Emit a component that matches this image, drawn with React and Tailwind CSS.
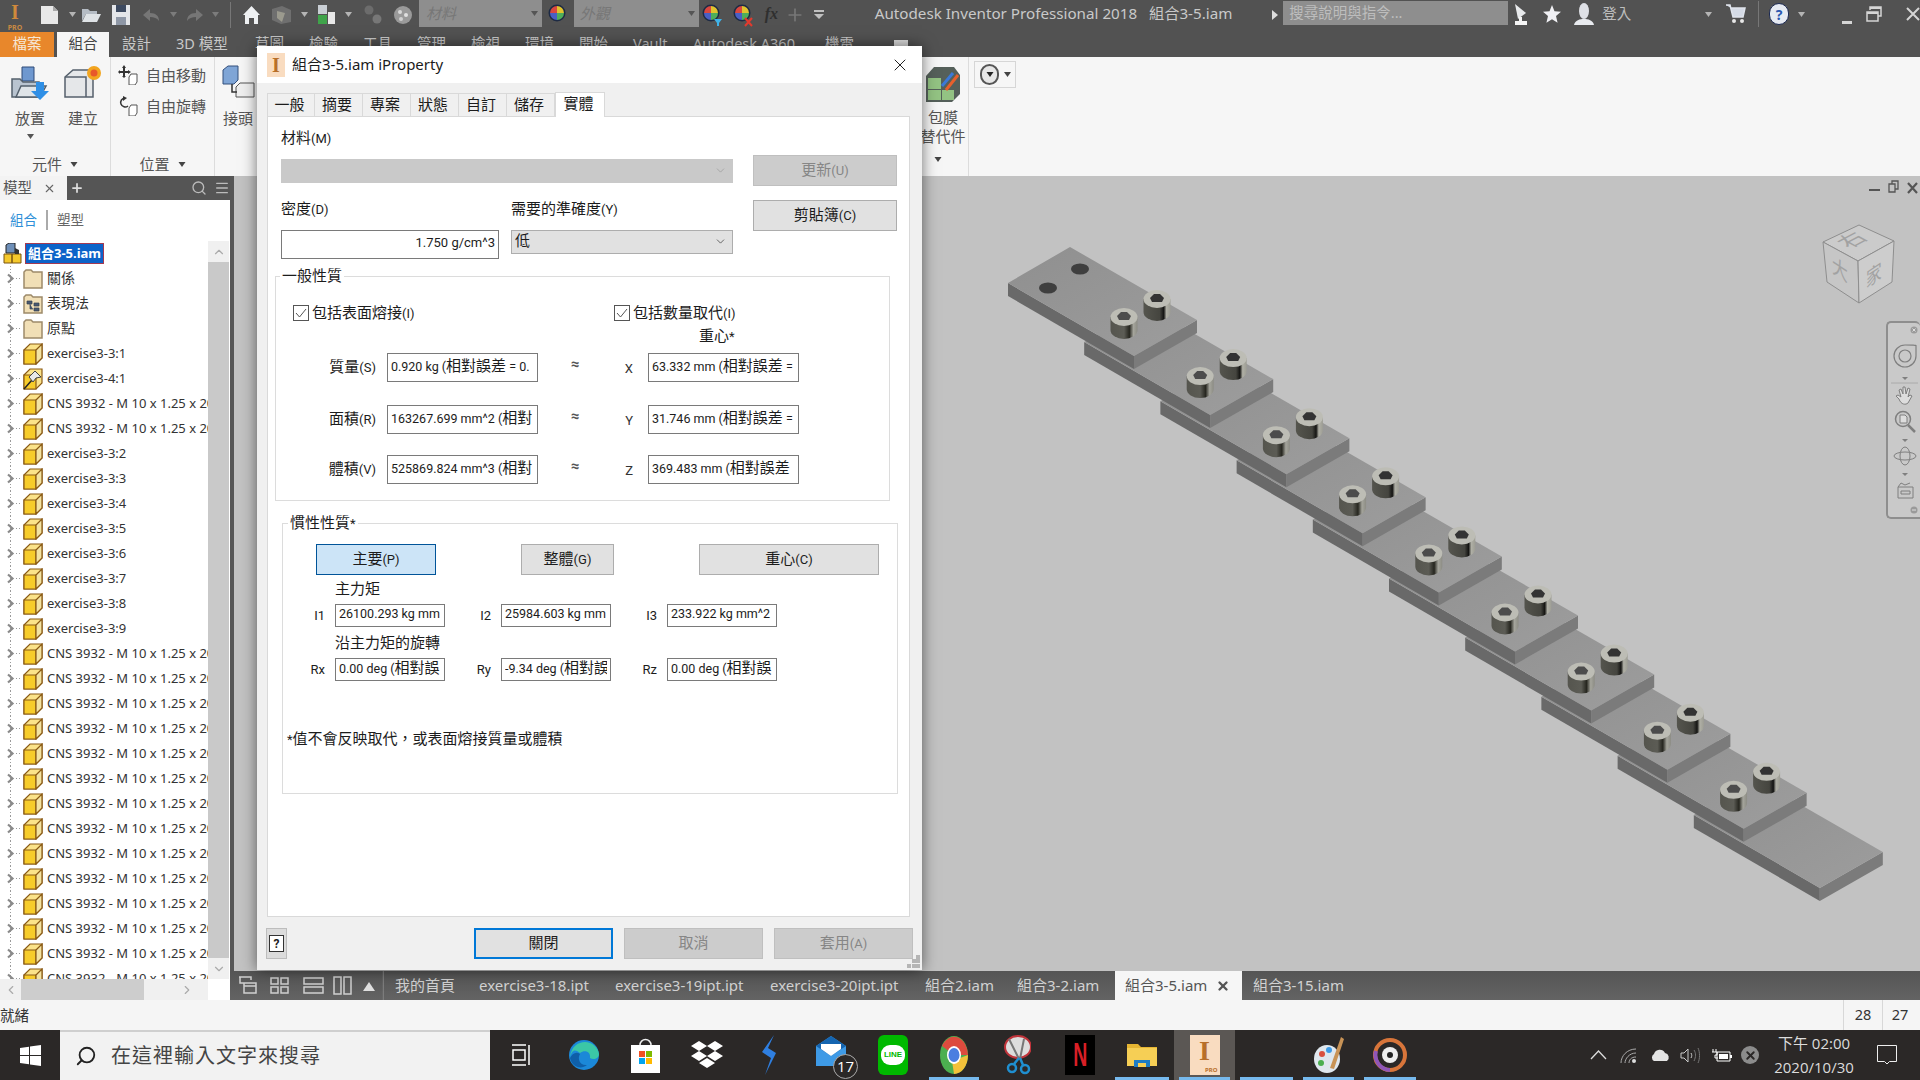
import React from 'react';
import { ChevronDown, ChevronLeft, ChevronRight, ChevronUp, Menu, Plus, Search, X } from 'lucide-react';

const Caret = ({ className = '', color = '#b5b5b5' }) => (
  <svg width="7" height="5" viewBox="0 0 7 5" className={`shrink-0 ${className}`}>
    <path d="M0 0h7L3.5 5z" fill={color} />
  </svg>
);

/* ---------- title bar icons ---------- */
const Ico = ({ w = 20, h = 20, className = '', children }) => (
  <svg width={w} height={h} viewBox={`0 0 ${w} ${h}`} className={`shrink-0 ${className}`}>
    {children}
  </svg>
);

const Ball = ({ className = '', badge }) => (
  <Ico w={20} h={24} className={className}>
    <circle cx="9" cy="10" r="8.5" fill="#1d2a44" />
    <path d="M9 3a7 7 0 0 1 7 7H9z" fill="#e0c22e" />
    <path d="M9 3a7 7 0 0 0-7 7h7z" fill="#d9473f" />
    <path d="M2 10a7 7 0 0 0 7 7v-7z" fill="#4a5fc4" />
    <path d="M16 10a7 7 0 0 1-7 7v-7z" fill="#4fae5a" />
    {badge === 'x' && <path d="M12 15l7 8M19 15l-7 8" stroke="#e23a2e" strokeWidth="2" />}
    {badge === 'cup' && <path d="M12 16h8l-3 4v3h-2v-3z" fill="#3fb2e8" />}
  </Ico>
);

const TitleBar = () => (
  <div className="h-[32px] shrink-0 bg-[#525252] flex items-center text-[#c8c8c8]">
    <div className="w-[28px] h-full flex flex-col items-center pl-[2px]">
      <span className="text-[#d08a3c] font-bold text-[20px] leading-[24px] font-['Liberation_Serif',serif]">I</span>
      <span className="text-[#c98a42] font-bold text-[7px] leading-[7px]">PRO</span>
    </div>
    <Ico w={19} h={20} className="ml-[12px] -mt-[3px]">
      <path d="M1 1h12l5 5v13H1z" fill="#e8e8e8" />
      <path d="M13 1l5 5h-5z" fill="#a8a8a8" />
    </Ico>
    <Caret className="ml-[10px] -mt-[3px]" />
    <Ico w={20} h={16} className="ml-[5px] -mt-[3px]">
      <path d="M1 14V2h6l2 2h7v3H5l-4 7z" fill="#b5bcc4" />
      <path d="M5 7h15l-4 8H1z" fill="#dfe3e6" />
    </Ico>
    <Ico w={20} h={22} className="ml-[10px] -mt-[3px]">
      <path d="M1 1h18v20H1z" fill="#e4e6e9" />
      <path d="M5 1h10v7H5z" fill="#3d4a60" />
      <path d="M5 13h10v8H5z" fill="#8e97a6" />
    </Ico>
    <Ico w={18} h={14} className="ml-[11px] -mt-[3px]">
      <path d="M8 1L1 7l7 6V9c4 0 7 1 9 4 0-5-3-8-9-8z" fill="#767676" />
    </Ico>
    <Caret className="ml-[10px] -mt-[3px]" color="#7c7c7c" />
    <Ico w={18} h={14} className="ml-[9px] -mt-[3px]">
      <path d="M10 1l7 6-7 6V9c-4 0-7 1-9 4 0-5 3-8 9-8z" fill="#767676" />
    </Ico>
    <Caret className="ml-[8px] -mt-[3px]" color="#7c7c7c" />
    <div className="ml-[11px] w-px h-[26px] -mt-[3px] bg-[#777]" />
    <Ico w={17} h={20} className="ml-[12px] -mt-[3px]">
      <path d="M8.500 1L0 10h2v9h4v-6h5v6h4v-9h2z" fill="#eef0f2" />
    </Ico>
    <Ico w={21} h={20} className="ml-[11px] -mt-[3px]">
      <path d="M1 4l10-3 9 4v12l-10 2-9-4z" fill="#6f6f6f" />
      <path d="M6 6l8 2-3 9-5-4z" fill="#9b9a8e" />
    </Ico>
    <Caret className="ml-[9px] -mt-[3px]" />
    <Ico w={20} h={22} className="ml-[9px] -mt-[3px]">
      <rect x="1" y="1" width="9" height="9" fill="#c9ced4" />
      <rect x="1" y="11" width="9" height="9" fill="#3fa34a" />
      <rect x="11" y="8" width="7" height="12" fill="#e8e8e8" />
    </Ico>
    <Caret className="ml-[8px] -mt-[3px]" />
    <Ico w={18} h={22} className="ml-[12px] -mt-[3px]">
      <circle cx="5" cy="6" r="4.500" fill="#6c6c6c" />
      <circle cx="13" cy="15" r="4.500" fill="#777" />
    </Ico>
    <Ico w={18} h={18} className="ml-[12px] -mt-[3px]">
      <circle cx="9" cy="9" r="9" fill="#9a9a9a" />
      <circle cx="6" cy="6" r="2" fill="#d8d8d8" />
      <circle cx="12" cy="9" r="2" fill="#e0e0e0" />
      <circle cx="7" cy="13" r="2" fill="#cfcfcf" />
    </Ico>
    <div className="ml-[7px] w-[123px] h-[27px] self-start bg-[#8e8e8e] flex items-center justify-between pl-[7px] pr-[3px]">
      <span className="italic text-[15px] text-[#777]">材料</span>
      <Caret color="#555" className="w-[9px]" />
    </div>
    <Ball className="ml-[6px] -mt-[3px]" />
    <div className="ml-[6px] w-[125px] h-[27px] self-start bg-[#8e8e8e] flex items-center justify-between pl-[6px] pr-[3px]">
      <span className="italic text-[15px] text-[#777]">外觀</span>
      <Caret color="#555" className="w-[9px]" />
    </div>
    <Ball className="ml-[3px] -mt-[3px]" badge="cup" />
    <Ball className="ml-[11px] -mt-[3px]" badge="x" />
    <span className="ml-[12px] w-[18px] italic font-bold text-[16px] text-[#2f2f2f] font-['Liberation_Serif',serif] -mt-[4px]">fx</span>
    <Plus size={20} color="#777" className="ml-[2px] -mt-[3px]" />
    <Ico w={10} h={11} className="ml-[9px] -mt-[3px]">
      <path d="M0 1h10v2H0zM0 5h10L5 10z" fill="#c0c0c0" />
    </Ico>
    <span className="ml-[51px] w-[398px] text-[15.2px] text-[#c9c9c9] whitespace-pre -mt-[5px]">Autodesk Inventor Professional 2018{'   '}組合3-5.iam</span>
    <Ico w={6} h={10} className="-mt-[3px]">
      <path d="M0 0l6 5-6 5z" fill="#ddd" />
    </Ico>
    <div className="ml-[5px] w-[225px] h-[24px] self-start mt-[1px] bg-[#8e8e8e] flex items-center pl-[6px] text-[14.5px] text-[#bdbdbd]">搜尋說明與指令...</div>
    <Ico w={16} h={24} className="ml-[5px] -mt-[4px]">
      <path d="M2 2l11 9-8 6z" fill="#e8eaec" />
      <path d="M6 15h3v4h5v4H2v-4h4z" fill="#f5f5f5" />
    </Ico>
    <Ico w={18} h={18} className="ml-[14px] -mt-[4px]">
      <path d="M9 0l2.500 6.300 6.500.5-5 4.300 1.600 6.600L9 14.200 3.400 17.700 5 11.100 0 6.800l6.500-.5z" fill="#f0f0f4" />
    </Ico>
    <Ico w={20} h={24} className="ml-[13px] -mt-[4px]">
      <ellipse cx="10" cy="9" rx="5" ry="8" fill="#dfe1e6" />
      <path d="M0 23c1-5 6-6 10-6s9 1 10 6z" fill="#e9ebef" />
    </Ico>
    <span className="ml-[8px] w-[103px] text-[14.5px] text-[#bdbdbd] -mt-[5px]">登入</span>
    <Caret className="-mt-[3px]" />
    <Ico w={20} h={22} className="ml-[14px] -mt-[4px]">
      <path d="M0 2h4l3 12h10l2-9H5" fill="#d5dbe6" stroke="#dfe4ec" strokeWidth="1.500" />
      <circle cx="8" cy="18" r="2" fill="#e8e8e8" />
      <circle cx="16" cy="18" r="2" fill="#e8e8e8" />
    </Ico>
    <div className="ml-[12px] w-px h-[26px] -mt-[4px] bg-[#777]" />
    <div className="ml-[10px] w-[20px] h-[22px] -mt-[4px] rounded-full bg-[#e6eaf2] border border-[#1d2a52] flex items-center justify-center text-[#2b57b0] font-bold text-[14px]">?</div>
    <Caret className="ml-[9px] -mt-[3px]" />
    <div className="ml-[37px] w-[10px] h-[3px] bg-[#d5d5d5] self-end mb-[8px]" />
    <Ico w={16} h={16} className="ml-[14px] -mt-[4px]">
      <path d="M4 4V1h11v9h-3M1 6h11v9H1zM1 6h11" fill="none" stroke="#d5d5d5" strokeWidth="1.500" />
      <path d="M1 6h11v2H1zM4 1h11v2H4z" fill="#d5d5d5" />
    </Ico>
    <Ico w={14} h={14} className="ml-[24px] -mt-[4px]">
      <path d="M1 1l12 12M13 1L1 13" stroke="#d5d5d5" strokeWidth="2" />
    </Ico>
  </div>
);

/* ---------- ribbon ---------- */
const ribbonTabs = [
  ['設計', 'w-[54px]'],
  ['3D 模型', 'w-[79px]'],
  ['草圖', 'w-[54px]'],
  ['檢驗', 'w-[54px]'],
  ['工具', 'w-[54px]'],
  ['管理', 'w-[54px]'],
  ['檢視', 'w-[54px]'],
  ['環境', 'w-[54px]'],
  ['開始', 'w-[54px]'],
  ['Vault', 'w-[60px]'],
  ['Autodesk A360', 'w-[132px]'],
  ['機電', 'w-[69px]'],
];

const RibbonTabs = () => (
  <div className="h-[25px] shrink-0 bg-[#525252] flex text-[14.5px] text-[#c9c9c9]">
    <div className="w-[54px] bg-[#e8872b] text-[#f6e6d4] flex items-center justify-center pb-[1px]">檔案</div>
    <div className="ml-[3px] w-[52px] bg-[#f6f6f6] text-[#444] flex items-center justify-center pb-[1px]">組合</div>
    <div className="w-[13px]" />
    {ribbonTabs.map(([label, w]) => (
      <div key={label} className={`${w} flex items-center whitespace-nowrap pb-[1px]`}>{label}</div>
    ))}
    <div className="w-[14px] h-[9px] mt-[8px] bg-[#ddd]" />
  </div>
);

const Ribbon = () => (
  <div className="h-[119px] shrink-0 bg-[#f6f6f6] flex text-[#555] text-[15px]">
    <div className="w-[111px] border-r border-[#dcdcdc] flex flex-col">
      <div className="flex-1 flex">
        <div className="w-[60px] flex flex-col items-center pt-[8px]">
          <Ico w={40} h={36}>
            <path d="M12 2h12v14H12z" fill="#6f98cf" stroke="#2e4a78" />
            <path d="M2 14h8l3 3h16v15H2z" fill="#b9c4d0" stroke="#54606c" strokeWidth="1.500" />
            <path d="M6 32l5-11h25l-6 11z" fill="#dfe4e8" stroke="#54606c" strokeWidth="1.500" />
            <path d="M26 17h8v9h5l-9 9-9-9h5z" fill="#2f8fe6" />
          </Ico>
          <span className="mt-[7px] leading-[20px]">放置</span>
          <Caret color="#555" className="mt-[6px]" />
        </div>
        <div className="flex flex-col items-center pt-[8px] w-[40px] ml-[3px]">
          <Ico w={38} h={36}>
            <path d="M1 12l8-7h20v27H1z" fill="#e5e7e9" stroke="#55606c" strokeWidth="1.500" />
            <path d="M1 12h21v20" fill="none" stroke="#55606c" strokeWidth="1.500" />
            <circle cx="30" cy="8" r="7" fill="#f2a51f" />
            <circle cx="30" cy="8" r="3.500" fill="#e8582a" />
          </Ico>
          <span className="mt-[7px] leading-[20px]">建立</span>
        </div>
      </div>
      <div className="h-[22px] flex items-center justify-center gap-[8px] mb-[1px]">元件<Caret color="#444" className="w-[8px]" /></div>
    </div>
    <div className="w-[104px] border-r border-[#dcdcdc] flex flex-col">
      <div className="flex-1 pl-[7px] pt-[8px]">
        <div className="flex items-center h-[20px]">
          <Ico w={20} h={20}>
            <path d="M6 0l2 3H7v3h3V5l3 2-3 2V8H7v3h1l-2 2-2-2h1V8H2v1L0 7l2-2v1h3V3H4z" fill="#333" />
            <path d="M11 12l2-3h6v8l-2 3h-6z" fill="#fff" stroke="#555" />
          </Ico>
          <span className="ml-[8px]">自由移動</span>
        </div>
        <div className="flex items-center h-[20px] mt-[11px]">
          <Ico w={20} h={20}>
            <path d="M7 2a4.500 4.500 0 1 0 3 8" fill="none" stroke="#333" strokeWidth="1.500" />
            <path d="M5 0l4 2-4 3z" fill="#333" />
            <path d="M11 12l2-3h6v8l-2 3h-6z" fill="#fff" stroke="#555" />
          </Ico>
          <span className="ml-[8px]">自由旋轉</span>
        </div>
      </div>
      <div className="h-[22px] flex items-center justify-center gap-[8px] mb-[1px]">位置<Caret color="#444" className="w-[8px]" /></div>
    </div>
    <div className="w-[60px] pl-[7px] pt-[8px] flex flex-col">
      <Ico w={36} h={36}>
        <path d="M1 5l5-4h10v14l-4 4H1z" fill="#7fa5d6" stroke="#34507c" />
        <path d="M14 22l4-4h14v14H14z" fill="#efefef" stroke="#555" />
        <path d="M10 19v8h5" fill="none" stroke="#333" strokeWidth="1.500" />
      </Ico>
      <span className="mt-[7px] leading-[20px] ml-[1px]">接頭</span>
    </div>
    <div className="w-[645px]" />
    <div className="w-[51px] flex flex-col items-center pt-[7px] -ml-[2px] border-r border-[#dcdcdc]">
      <Ico w={38} h={40}>
        <path d="M2 12l8-9h20l6 8v19l-8 8H2z" fill="#55605a" />
        <path d="M4 14h13v11H4zM4 26h13v10H4zM18 26h12v10H18z" fill="#93c383" />
        <path d="M18 22l11-13" stroke="#3b79d8" strokeWidth="3" />
        <path d="M22 26l12-15" stroke="#e8602c" strokeWidth="3" />
      </Ico>
      <span className="mt-[4px] leading-[19px]">包膜</span>
      <span className="leading-[19px] whitespace-nowrap">替代件</span>
      <Caret color="#444" className="w-[8px] mt-[11px] -ml-[10px]" />
    </div>
    <div className="ml-[5px] mt-[4px] w-[42px] h-[27px] border border-[#d6d6d6] flex items-center justify-center gap-[5px] pl-[1px]">
      <span className="w-[19px] h-[21px] rounded-full border-2 border-[#555] bg-[#e6e6e6] flex items-center justify-center">
        <Caret color="#222" className="w-[10px]" />
      </span>
      <Caret color="#444" />
    </div>
  </div>
);

/* ---------- model browser ---------- */
const YellowCube = () => (
  <Ico w={20} h={22}>
    <path d="M1 7l6-6h12v14l-6 6H1z" fill="#fbe38a" stroke="#8a5a14" strokeWidth="1.200" />
    <path d="M1 7h12v14H1z" fill="#f7cc2a" stroke="#8a5a14" strokeWidth="1.200" />
    <path d="M13 7l6-6v14l-6 6z" fill="#f3e3a2" stroke="#8a5a14" strokeWidth="1.200" />
  </Ico>
);

const PinnedCube = () => (
  <Ico w={20} h={22}>
    <path d="M1 7l6-6h12v14l-6 6H1z" fill="#fbe38a" stroke="#8a5a14" strokeWidth="1.200" />
    <path d="M1 7h12v14H1z" fill="#f7cc2a" stroke="#8a5a14" strokeWidth="1.200" />
    <path d="M1 21l8-9" stroke="#222" strokeWidth="1.500" />
    <path d="M6 9l6-6 6 6-5 1-3 4z" fill="#e8e8e8" stroke="#444" />
  </Ico>
);

const Folder = ({ tree }) => (
  <Ico w={20} h={20}>
    <path d="M1 3l2-2h5l2 2h9v16H1z" fill="#f1dfb6" stroke="#9d8a6a" strokeWidth="1.500" />
    {tree && <path d="M4 7h5v3H4zM7 10v5h3M11 9h5v3h-5zM11 14h5v3h-5z" fill="#4a5a70" stroke="#344050" strokeWidth=".7" />}
  </Ico>
);

const Branch = () => (
  <svg width="20" height="25" viewBox="0 0 20 25" className="shrink-0">
    <path d="M10.500 0V25" stroke="#9a9a9a" strokeDasharray="1 2" />
    <path d="M16 12.500h4" stroke="#9a9a9a" strokeDasharray="1 2" />
    <path d="M8 8.500l4.500 4-4.500 4" fill="none" stroke="#8a8a8a" strokeWidth="2.200" />
  </svg>
);

const cns = 'CNS 3932 - M 10 x 1.25 x 20';
const treeRows = [
  ['關係', 'folder'],
  ['表現法', 'tree'],
  ['原點', 'folder'],
  ['exercise3-3:1'],
  ['exercise3-4:1', 'pin'],
  [cns],
  [cns],
  ['exercise3-3:2'],
  ['exercise3-3:3'],
  ['exercise3-3:4'],
  ['exercise3-3:5'],
  ['exercise3-3:6'],
  ['exercise3-3:7'],
  ['exercise3-3:8'],
  ['exercise3-3:9'],
  ...Array(14).fill([cns]),
];

const TreeIcon = ({ kind }) => {
  if (kind === 'folder') return <Folder />;
  if (kind === 'tree') return <Folder tree />;
  if (kind === 'pin') return <PinnedCube />;
  return <YellowCube />;
};

const ModelPanel = () => (
  <div className="w-[230px] shrink-0 bg-white flex flex-col text-[#333]">
    <div className="h-[24px] shrink-0 flex bg-[#555] text-[#dcdcdc]">
      <div className="w-[67px] bg-[#f3f3f3] text-[#555] flex items-center pl-[3px] text-[14.5px]">
        模型
        <X size={13} color="#666" className="ml-[11px]" />
      </div>
      <Plus size={14} strokeWidth={3} color="#ddd" className="ml-[3px] mt-[5px]" />
      <Search size={16} color="#bbb" className="ml-[107px] mt-[4px]" />
      <Menu size={16} color="#bbb" className="ml-[7px] mt-[4px]" />
    </div>
    <div className="h-[41px] shrink-0 flex items-center pl-[10px] text-[13.5px] pb-[1px]">
      <span className="text-[#2e8fd8]">組合</span>
      <span className="w-[2px] h-[20px] bg-[#aaa] ml-[9px] mr-[9px]" />
      <span className="text-[#666]">塑型</span>
    </div>
    <div className="flex-1 flex min-h-0">
      <div className="w-[208px] overflow-hidden whitespace-nowrap text-[13px]">
        <div className="h-[25px] flex items-center pl-[3px]">
          <Ico w={20} h={22}>
            <path d="M3 2l3-2h6v10H3z" fill="#6e8fb8" stroke="#222" />
            <path d="M1 11h8v9H1zM9 11h9v9H9z" fill="#f5c92c" stroke="#7a5510" />
            <path d="M12 5l4 2v4h-4z" fill="#333" />
          </Ico>
          <span className="ml-[2px] h-[21px] px-[2px] leading-[19px] bg-[#0c63c9] border border-[#a33a52] text-white font-bold text-[13px]">組合3-5.iam</span>
        </div>
        {treeRows.map(([label, kind], i) => (
          <div key={i} className="h-[25px] flex items-center">
            <Branch />
            <span className="ml-[3px] flex"><TreeIcon kind={kind} /></span>
            <span className={kind === 'folder' || kind === 'tree' ? 'ml-[4px] text-[14px] pb-[2px]' : 'ml-[4px]'}>{label}</span>
          </div>
        ))}
      </div>
      <div className="w-[21px] bg-[#c9c9c9] flex flex-col justify-between">
        <div className="h-[21px] bg-[#f0f0f0] flex items-center justify-center"><ChevronUp size={14} color="#aaa" /></div>
        <div className="h-[21px] bg-[#f0f0f0] flex items-center justify-center"><ChevronDown size={14} color="#aaa" /></div>
      </div>
    </div>
    <div className="h-[21px] shrink-0 flex w-[208px] bg-[#f0f0f0]">
      <div className="w-[21px] flex items-center justify-center"><ChevronLeft size={14} color="#aaa" /></div>
      <div className="w-[123px] bg-[#cdcdcd]" />
      <div className="flex-1 flex items-center justify-center pl-[22px]"><ChevronRight size={14} color="#aaa" /></div>
    </div>
  </div>
);

/* ---------- viewport ---------- */
const STEP_X = 76.2;
const STEP_Y = 59.1;
const plateSteps = [9, 8, 7, 6, 5, 4, 3, 2, 1, 0];

const Bolt = ({ x, y, flip }) => (
  <g>
    <path d={`M${x - 13.5} ${y}v13a13.500 9 0 0 0 27 0v-13z`} fill={flip ? 'url(#bolt2)' : 'url(#bolt)'} />
    <ellipse cx={x} cy={y} rx="13.500" ry="9" fill="#bdbdb5" />
    <path d={`M${x - 7} ${y - 1}l4-4h6l4 4-2 4h-10z`} fill={flip ? '#333' : '#4c4c4c'} />
  </g>
);

const Plate = ({ i }) => {
  const dx = i * STEP_X;
  const dy = i * STEP_Y;
  const p = (x, y) => `${x + dx},${y + dy}`;
  return (
    <g>
      <polygon points={`${p(1008, 283)} ${p(1134, 356)} ${p(1134, 369)} ${p(1008, 296)}`} fill="#696969" />
      <polygon points={`${p(1134, 356)} ${p(1197, 320)} ${p(1197, 333)} ${p(1134, 369)}`} fill="#7b7b7b" />
      <polygon points={`${p(1070, 247)} ${p(1197, 320)} ${p(1134, 356)} ${p(1008, 283)}`} fill="url(#top)" />
      {i === 0 && (
        <>
          <ellipse cx="1048" cy="288" rx="9" ry="5.500" fill="#3f3f3f" />
          <ellipse cx="1080" cy="269" rx="9" ry="5.500" fill="#3f3f3f" />
        </>
      )}
      {i < 9 && (
        <>
          <Bolt x={1157 + dx} y={299 + dy} flip />
          <Bolt x={1124 + dx} y={317 + dy} />
        </>
      )}
    </g>
  );
};

const NavBar = () => (
  <div className="absolute right-0 top-[145px] w-[34px] h-[198px] rounded-l-[5px] rounded-tr-[5px] border-2 border-r-0 border-[#8e8e8e] bg-[#c9c9c9]">
    <svg width="32" height="194" viewBox="0 0 32 194" fill="none" stroke="#7f7f7f">
      <circle cx="26" cy="7" r="3.500" fill="#9a9a9a" stroke="none" />
      <path d="M24.500 5.500l3 3M27.500 5.500l-3 3" stroke="#ddd" />
      <path d="M17 22c6 0 12 0 11 1v10a11 11 0 1 1-11-11z" strokeWidth="1.200" />
      <circle cx="17" cy="33" r="6" strokeWidth="1.200" />
      <path d="M14 54h6l-3 3z" fill="#7f7f7f" stroke="none" />
      <path d="M3 60h27" stroke="#aaa" />
      <path d="M11 76l-3-3 2-1 3 2-2-7 2-1 2 5 0-7h2l1 7 2-6 2 1-2 8 2-2 2 1-4 7c-2 2-7 2-9-4z" strokeWidth="1" fill="#ddd" />
      <circle cx="15" cy="96" r="7.500" strokeWidth="1.500" />
      <path d="M20 102l7 7" strokeWidth="2.500" />
      <path d="M12 92h5l2 2v6h-7z" fill="#ddd" />
      <path d="M14 116h6l-3 3z" fill="#7f7f7f" stroke="none" />
      <ellipse cx="17" cy="133" rx="11" ry="4" />
      <ellipse cx="17" cy="133" rx="5" ry="9" />
      <path d="M14 150h6l-3 3z" fill="#7f7f7f" stroke="none" />
      <path d="M10 164h15v11H10zM13 168h9v3h-9zM10 164l3-4 4 2 5-2" />
      <circle cx="26" cy="187" r="3.500" fill="#9a9a9a" stroke="none" />
      <path d="M24 187h4" stroke="#ddd" />
    </svg>
  </div>
);

const Viewport = () => (
  <div className="flex-1 relative bg-[#c2c2c2] overflow-hidden">
    <svg className="absolute inset-0 w-full h-full" viewBox="234 176 1686 795">
      <defs>
        <linearGradient id="top" x1="0" y1="0" x2="1" y2="1">
          <stop offset="0" stopColor="#8f8f8f" />
          <stop offset="1" stopColor="#9d9d9d" />
        </linearGradient>
        <linearGradient id="bolt">
          <stop offset="0" stopColor="#55554e" />
          <stop offset="0.500" stopColor="#5c5c55" />
          <stop offset="0.700" stopColor="#26261f" />
          <stop offset="0.850" stopColor="#a5a59c" />
          <stop offset="1" stopColor="#8c8c84" />
        </linearGradient>
        <linearGradient id="bolt2">
          <stop offset="0" stopColor="#55554e" />
          <stop offset="0.600" stopColor="#45453f" />
          <stop offset="0.750" stopColor="#141412" />
          <stop offset="0.850" stopColor="#b0b0a6" />
          <stop offset="1" stopColor="#9d9d94" />
        </linearGradient>
      </defs>
      {plateSteps.map((i) => (
        <Plate key={i} i={i} />
      ))}
      {/* view cube */}
      <g stroke="#8e8e8e" strokeWidth="1" fill="#c9c9c9">
        <polygon points="1859,225 1894,241 1858,261 1823,242" fill="#cbcbcb" />
        <polygon points="1823,242 1858,261 1859,303 1827,282" fill="#c6c6c6" />
        <polygon points="1894,241 1892,282 1859,303 1858,261" fill="#cdcdcd" />
      </g>
      <g fill="#a2a2a2" stroke="none" fontFamily="'Noto Sans CJK TC', sans-serif" fontSize="21">
        <text transform="matrix(.95 -.5 .95 .5 1849 249)">右</text>
        <text transform="matrix(.75 .5 0 1 1832 272)">大</text>
        <text transform="matrix(.75 -.5 0 1 1866 288)">家</text>
      </g>
      <path d="M1869 190h11" stroke="#555" strokeWidth="2" />
      <path d="M1889 184h6v8h-6zM1892 184v-3h6v8h-3" fill="#c2c2c2" stroke="#555" strokeWidth="1.300" />
      <path d="M1908 183l9 10M1917 183l-9 10" stroke="#555" strokeWidth="2.200" />
    </svg>
    <NavBar />
  </div>
);

/* ---------- document tabs, status bar ---------- */
const docTabs = [
  ['我的首頁', 'w-[84px]'],
  ['exercise3-18.ipt', 'w-[136px]'],
  ['exercise3-19ipt.ipt', 'w-[155px]'],
  ['exercise3-20ipt.ipt', 'w-[155px]'],
  ['組合2.iam', 'w-[92px]'],
  ['組合3-2.iam', 'w-[98px]'],
];

const DocTabs = () => (
  <div className="h-[29px] shrink-0 bg-gradient-to-b from-[#555] to-[#636363] flex items-center text-[15px] text-[#d2d2d2] whitespace-nowrap">
    <svg width="154" height="29" viewBox="0 0 154 29" fill="none" stroke="#cfcfcf" strokeWidth="1.500" className="shrink-0">
      <path d="M9 6h12v3M14 12h-4V6M14 12h12v10H14zM14 15h12" />
      <path d="M41 7h7v6h-7zM51 7h7v6h-7zM41 16h7v6h-7zM51 16h7v6h-7z" />
      <path d="M74 7h19v6H74zM74 16h19v6H74z" />
      <path d="M104 6h7v17h-7zM114 6h7v17h-7z" />
      <path d="M133 20l6-9 6 9z" fill="#e0e0e0" stroke="none" />
      <path d="M153.500 0v29" stroke="#7c7c7c" />
    </svg>
    <span className="w-[11px]" />
    {docTabs.map(([label, w]) => (
      <span key={label} className={`${w} shrink-0`}>{label}</span>
    ))}
    <div className="w-[127px] h-full shrink-0 bg-[#f6f6f6] text-[#555] flex items-center pl-[10px] pr-[12px] justify-between">
      組合3-5.iam
      <X size={14} strokeWidth={4} color="#555" />
    </div>
    <span className="ml-[11px]">組合3-15.iam</span>
  </div>
);

const StatusBar = () => (
  <div className="h-[30px] shrink-0 bg-[#f5f5f5] flex items-center justify-between text-[14.5px] text-[#333]">
    <span className="pt-[1px]">就緒</span>
    <div className="flex h-full">
      <span className="w-[39px] border-l border-[#d8d8d8] flex items-center justify-center">28</span>
      <span className="w-[38px] border-l border-[#d8d8d8] flex items-center justify-center pr-[3px]">27</span>
    </div>
  </div>
);

/* ---------- taskbar ---------- */
const Slot = ({ w, active, on, children }) => (
  <div className={`${w} h-full shrink-0 flex flex-col items-center justify-center relative ${active ? 'bg-[#5b5754]' : ''}`}>
    {children}
    {on && <span className="absolute bottom-0 left-[5px] right-[5px] h-[3px] bg-[#76b9ed]" />}
  </div>
);

const Taskbar = () => (
  <div className="h-[50px] shrink-0 bg-[#2b2827] flex">
    <div className="w-[60px] flex items-center justify-center">
      <Ico w={21} h={21}>
        <path d="M0 3l9-1.300V10H0zM10 1.500L21 0v10H10zM0 11h9v8.300L0 18zM10 11h11v10l-11-1.500z" fill="#fff" />
      </Ico>
    </div>
    <div className="w-[430px] bg-[#f2f2f2] border-t-2 border-[#cfcfcf] flex items-center pl-[15px] text-[20px] tracking-[1px] text-[#444]">
      <Search size={22} color="#222" className="-scale-x-100" />
      <span className="ml-[14px]">在這裡輸入文字來搜尋</span>
    </div>
    <div className="w-[8px]" />
    <Slot w="w-[54px]">
      <Ico w={20} h={22} className="-ml-[9px]">
        <path d="M1 1h14M1 21h14M2 6h12v10H2zM18 1v20" stroke="#fff" strokeWidth="1.500" fill="none" />
      </Ico>
    </Slot>
    <Slot w="w-[64px]">
      <svg width="30" height="30" viewBox="0 0 30 30">
        <circle cx="15" cy="15" r="15" fill="#1b88d8" />
        <path d="M1 17C2 7 9 2 16 2c7 0 13 5 14 12 0 5-6 6-9 4 1-6-5-9-10-5C5 8 3 11 1 17z" fill="#3bc7a6" />
        <path d="M11 14c-3 5 0 12 7 11-6 5-15 2-17-7 2-4 6-7 10-4z" fill="#0f5fa8" />
      </svg>
    </Slot>
    <Slot w="w-[58px]">
      <svg width="29" height="36" viewBox="0 0 29 36">
        <path d="M9 8a5.500 5.500 0 0 1 11 0" fill="none" stroke="#eee" strokeWidth="1.500" />
        <path d="M0 8h29v28H0z" fill="#fff" />
        <rect x="8" y="14" width="6" height="6" fill="#f25022" />
        <rect x="15" y="14" width="6" height="6" fill="#7fba00" />
        <rect x="8" y="21" width="6" height="6" fill="#00a4ef" />
        <rect x="15" y="21" width="6" height="6" fill="#ffb900" />
      </svg>
    </Slot>
    <Slot w="w-[62px]">
      <svg width="32" height="30" viewBox="0 0 32 30" fill="#fff" className="ml-[4px]">
        <path d="M8 1l8 5-8 5-8-5zM24 1l8 5-8 5-8-5zM8 11l8 5-8 5-8-5zM24 11l8 5-8 5-8-5zM16 18l8 5-8 5-8-5z" />
      </svg>
    </Slot>
    <Slot w="w-[64px]">
      <svg width="16" height="40" viewBox="0 0 16 40">
        <path d="M14 0L2 17l9 6-6 17 11-22-8-5z" fill="#2f7fe0" />
      </svg>
    </Slot>
    <Slot w="w-[62px]">
      <div className="relative w-[34px] h-[40px] ml-[4px]">
        <svg width="30" height="30" viewBox="0 0 30 30" className="mt-[1px]">
          <path d="M0 10L15 0l15 10v20H0z" fill="#3e9ae6" />
          <path d="M0 10l15 10 15-10-15-10z" fill="#1565b0" />
          <path d="M5 8h20v5l-10 7-10-7z" fill="#fff" />
        </svg>
        <span className="absolute left-[17px] top-[19px] w-[25px] h-[25px] rounded-full bg-[#2b2827] border border-[#aaa] flex items-center justify-center text-white text-[15px] font-['Open_Sans',sans-serif]">17</span>
      </div>
    </Slot>
    <Slot w="w-[62px]">
      <div className="w-[30px] h-[40px] rounded-[6px] bg-[#00b900] flex items-center justify-center">
        <span className="w-[24px] h-[20px] rounded-[9px] bg-white text-[#00b900] font-bold text-[8px] flex items-center justify-center font-['Liberation_Sans',sans-serif]">LINE</span>
      </div>
    </Slot>
    <Slot w="w-[60px]" on>
      <svg width="28" height="38" viewBox="-14 -19 28 38">
        <ellipse rx="14" ry="19" fill="#4caf50" />
        <path d="M-12-9A14 19 0 0 1 14 0H0z" fill="#dd4b3e" />
        <path d="M14 0A14 19 0 0 1 0 19L-2 6z" fill="#f3c13a" />
        <ellipse rx="7" ry="9" fill="#fff" />
        <ellipse rx="5.500" ry="7" fill="#4a7ee0" />
      </svg>
    </Slot>
    <Slot w="w-[66px]">
      <svg width="28" height="40" viewBox="0 0 28 40">
        <ellipse cx="15" cy="12" rx="13" ry="11" fill="#ddd" stroke="#c0333a" strokeWidth="2" />
        <path d="M6 4l10 20M21 4l-4 20" stroke="#777" strokeWidth="2" />
        <circle cx="9" cy="33" r="4" fill="none" stroke="#1f8fd0" strokeWidth="2.500" />
        <circle cx="22" cy="34" r="4" fill="none" stroke="#1f8fd0" strokeWidth="2.500" />
        <path d="M11 29l5-6M20 30l-3-7" stroke="#1f8fd0" strokeWidth="2.500" />
      </svg>
    </Slot>
    <Slot w="w-[60px]">
      <div className="w-[30px] h-[40px] bg-black flex items-center justify-center overflow-hidden">
        <span className="text-[#d81f26] font-bold text-[26px] font-['Liberation_Sans',sans-serif] leading-none scale-x-75 scale-y-125">N</span>
      </div>
    </Slot>
    <Slot w="w-[64px]" on>
      <svg width="30" height="24" viewBox="0 0 30 24">
        <path d="M0 1h11l3 3h16v6H0z" fill="#e6b532" />
        <path d="M0 5h30v18H0z" fill="#f6cf55" />
        <path d="M7 17h16v7H7z" fill="#1d7cc4" />
        <path d="M11 20h8v4h-8z" fill="#f6cf55" />
      </svg>
    </Slot>
    <Slot w="w-[61px]" active on>
      <div className="w-[30px] h-[40px] bg-[#f9dcc0] flex flex-col">
        <span className="text-center text-[#b86f2a] font-bold text-[28px] leading-[31px] font-['Liberation_Serif',serif]">I</span>
        <span className="text-right pr-[2px] text-[#b86f2a] font-bold text-[6px] leading-[8px]">PRO</span>
      </div>
    </Slot>
    <Slot w="w-[63px]" on />
    <Slot w="w-[61px]" on>
      <svg width="30" height="38" viewBox="0 0 30 38">
        <ellipse cx="13" cy="23" rx="13" ry="14" fill="#dfe7ee" />
        <circle cx="8" cy="18" r="3" fill="#d9503f" />
        <circle cx="15" cy="14" r="3" fill="#3e9ae6" />
        <circle cx="7" cy="27" r="3" fill="#4caf50" />
        <path d="M27 1l3 2-10 30-4-1z" fill="#c89356" />
      </svg>
    </Slot>
    <Slot w="w-[62px]" on>
      <svg width="36" height="36" viewBox="0 0 36 36">
        <circle cx="18" cy="18" r="15" fill="none" stroke="#d8753a" strokeWidth="4" />
        <path d="M18 33A15 15 0 0 1 4 14" fill="none" stroke="#8f56b8" strokeWidth="4" />
        <circle cx="18" cy="18" r="8" fill="#eee" />
        <circle cx="18" cy="18" r="3" fill="#222" />
      </svg>
    </Slot>
    <div className="flex-1 flex items-center text-[#dcdcdc] relative">
      <svg width="17" height="10" viewBox="0 0 17 10" className="ml-[169px]"><path d="M1 9l7.500-8L16 9" fill="none" stroke="#ddd" strokeWidth="1.300" /></svg>
      <svg width="17" height="15" viewBox="0 0 17 15" className="ml-[13px]" fill="none" stroke="#aaa"><path d="M1 15C1 8 7 1 16 1M5 15c0-4 4-10 11-10M9 15c0-3 2-6 7-6" /><circle cx="14" cy="13" r="2" fill="#ddd" stroke="none" /></svg>
      <svg width="21" height="13" viewBox="0 0 21 13" className="ml-[13px]"><path d="M4 12a4 4 0 0 1 0-7 6 6 0 0 1 11-1 4.500 4.500 0 0 1 2 8z" fill="#e4e4e4" /></svg>
      <svg width="21" height="17" viewBox="0 0 21 17" className="ml-[9px]" fill="none" stroke="#ccc"><path d="M1 6h3l4-4v13l-4-4H1zM11 6c1 2 1 3 0 5" /><path d="M14 3c2 3 2 7 0 11M18 1c2 4 2 11 0 15" stroke="#777" /></svg>
      <svg width="20" height="13" viewBox="0 0 20 13" className="ml-[11px]"><path d="M1 0v3M4 0v3M0 3h5v3H3v3h3" fill="none" stroke="#fff" /><path d="M5 3h13v9H5z" fill="none" stroke="#fff" /><path d="M7 5h9v5H7z" fill="#fff" /><path d="M18 6h2v3h-2z" fill="#fff" /></svg>
      <span className="ml-[9px] w-[18px] h-[18px] rounded-full bg-[#8c8c8c] flex items-center justify-center"><X size={13} strokeWidth={3.500} color="#2b2827" /></span>
      <div className="ml-[9px] w-[92px] flex flex-col items-center leading-[24px] text-[15px] font-['Open_Sans','Noto_Sans_CJK_TC',sans-serif]">
        <span>下午 02:00</span>
        <span>2020/10/30</span>
      </div>
      <svg width="21" height="20" viewBox="0 0 21 20" className="ml-[17px]"><path d="M.5.5h19v16h-7l-2.500 2.500L7.500 16.500h-7z" fill="none" stroke="#eee" /></svg>
    </div>
  </div>
);

/* ---------- iProperty dialog ---------- */
// The dialog's Chinese runs are larger than its Latin ones, as in the Windows font
const M = ({ children }) =>
  String(children)
    .split(/([\u2e80-\u9fff\uff00-\uffef]+)/)
    .map((run, i) => (i % 2 ? <span key={i} className="text-[15px]">{run}</span> : run));

const Check = () => (
  <span className="w-[16px] h-[16px] shrink-0 bg-white border border-[#555] flex items-center justify-center">
    <svg width="12" height="10" viewBox="0 0 12 10"><path d="M1 5l3.500 4L11 1" fill="none" stroke="#555" /></svg>
  </span>
);

const Field = ({ children, className = '' }) => (
  <div className={`border border-[#7a7a7a] bg-white px-[3px] pb-[3px] flex items-center shrink-0 text-[12.5px] ${className}`}>
    <div className="w-full overflow-hidden whitespace-nowrap"><M>{children}</M></div>
  </div>
);

const dlgTabs = ['一般', '摘要', '專案', '狀態', '自訂', '儲存'];

const btn = 'shrink-0 h-[31px]';
const btnOn = `${btn} bg-[#e1e1e1] border border-[#adadad]`;
const btnOff = `${btn} bg-[#cccccc] border border-[#bfbfbf] text-[#868686]`;

const MassRow = ({ label, value, axis, axisValue, className = '' }) => (
  <div className={`flex items-center h-[29px] ${className}`}>
    <span className="w-[100px] text-right"><M>{label}</M></span>
    <Field className="ml-[11px] w-[151px] h-full">{value}</Field>
    <span className="w-[62px] pl-[12px] text-center text-[#555] text-[15px] font-bold -mt-[6px]">≈</span>
    <span className="w-[33px] text-right text-[#333] text-[13px] mt-[2px]">{axis}</span>
    <Field className="ml-[15px] w-[151px] h-full">{axisValue}</Field>
  </div>
);

const InertiaRow = ({ cells, className = '' }) => (
  <div className={`flex items-center h-[23px] ${className}`}>
    {cells.map(([label, value], i) => (
      <React.Fragment key={label}>
        <span className={i === 0 ? 'w-[42px] text-right' : 'w-[46px] text-right'}>{label}</span>
        <Field className="ml-[10px] w-[110px] h-full">{value}</Field>
      </React.Fragment>
    ))}
  </div>
);

const Dialog = () => (
  <div className="absolute left-[257px] top-[46px] w-[665px] h-[924px] bg-[#f0f0f0] shadow-[0_0_14px_rgba(0,0,0,0.55)] flex flex-col text-[13px] text-[#1c1c1c] font-['Roboto','Noto_Sans_CJK_TC',sans-serif]">
    <div className="h-[37px] shrink-0 bg-white flex items-center pl-[10px] pr-[12px]">
      <div className="w-[18px] h-[24px] bg-[#f9dcc0] flex items-center justify-center text-[#b86f2a] font-bold text-[20px] font-['Liberation_Serif',serif]">I</div>
      <span className="ml-[7px] text-[15px] font-['Noto_Sans','Noto_Sans_CJK_TC',sans-serif]">組合3-5.iam iProperty</span>
      <X size={20} strokeWidth={1.2} color="#222" className="ml-auto" />
    </div>
    <div className="flex-1 flex flex-col pl-[10px] pr-[12px] relative">
      <div className="h-[33px] shrink-0 flex items-end text-[15px]">
        {dlgTabs.map((t) => (
          <div key={t} className="w-[48px] h-[23px] border-t border-r border-[#d9d9d9] bg-[#f0f0f0] first:border-l flex items-center justify-center pr-[3px]">{t}</div>
        ))}
        <div className="w-[50px] h-[25px] border-t border-x border-[#d9d9d9] bg-white -mb-[1px] relative z-10 flex items-center justify-center pb-[2px] pr-[3px]">實體</div>
      </div>
      <div className="h-[801px] shrink-0 bg-white border border-[#d9d9d9]">
        {/* material */}
        <div className="mt-[11px] ml-[13px] h-[20px] leading-[20px]"><M>材料(M)</M></div>
        <div className="mt-[7px] ml-[13px] flex items-center">
          <div className="w-[452px] h-[24px] bg-[#c9c9c9] flex items-center justify-end pr-[6px]"><ChevronDown size={13} strokeWidth={1.3} color="#9a9a9a" /></div>
          <button className={`ml-[20px] w-[144px] ${btnOff}`}><M>更新(U)</M></button>
        </div>
        <div className="mt-[14px] ml-[13px] flex items-start">
          <div className="w-[452px]">
            <div className="flex h-[20px] -mt-[1px] leading-[20px]">
              <span className="w-[230px]"><M>密度(D)</M></span>
              <span><M>需要的準確度(Y)</M></span>
            </div>
            <div className="flex items-start mt-[11px]">
              <div className="w-[218px] h-[29px] shrink-0 border border-[#7a7a7a] bg-white px-[3px] pb-[3px] flex items-center justify-end">1.750 g/cm^3</div>
              <div className="ml-[12px] w-[222px] h-[24px] bg-[#e1e1e1] border border-[#adadad] flex items-center justify-between pl-[3px] pr-[5px] pb-[1px]">
                <M>低</M>
                <ChevronDown size={13} strokeWidth={1.3} color="#333" />
              </div>
            </div>
          </div>
          <button className={`ml-[20px] w-[144px] ${btnOn}`}><M>剪貼簿(C)</M></button>
        </div>

        {/* general properties */}
        <div className="mt-[17px] ml-[7px] w-[615px] h-[225px] border border-[#dcdcdc] relative">
          <span className="absolute -top-[11px] left-[4px] bg-white px-[2px] leading-[20px]"><M>一般性質</M></span>
          <div className="flex pt-[28px] pl-[17px] h-[45px]">
            <label className="w-[321px] flex items-center gap-[3px] h-[16px]"><Check /><span><M>包括表面熔接(I)</M></span></label>
            <label className="flex items-center gap-[3px] h-[16px]"><Check /><span><M>包括數量取代(I)</M></span></label>
          </div>
          <div className="pl-[423px] h-[31px] leading-[20px] pt-[4px]"><M>重心*</M></div>
          <MassRow label="質量(S)" value="0.920 kg (相對誤差 = 0." axis="X" axisValue="63.332 mm (相對誤差 =" />
          <MassRow className="mt-[23px]" label="面積(R)" value="163267.699 mm^2 (相對" axis="Y" axisValue="31.746 mm (相對誤差 =" />
          <MassRow className="mt-[21px]" label="體積(V)" value="525869.824 mm^3 (相對" axis="Z" axisValue="369.483 mm (相對誤差" />
        </div>

        {/* inertial properties */}
        <div className="mt-[22px] ml-[14px] w-[616px] h-[271px] border border-[#dcdcdc] relative">
          <span className="absolute -top-[11px] left-[5px] bg-white px-[2px] leading-[20px]"><M>慣性性質*</M></span>
          <div className="flex pt-[20px] pl-[33px]">
            <button className={`w-[120px] ${btn} bg-[#cce4f7] border border-[#005499]`}><M>主要(P)</M></button>
            <button className={`ml-[85px] w-[93px] ${btnOn}`}><M>整體(G)</M></button>
            <button className={`ml-[85px] w-[180px] ${btnOn}`}><M>重心(C)</M></button>
          </div>
          <div className="mt-[4px] ml-[52px] h-[20px] leading-[20px]"><M>主力矩</M></div>
          <InertiaRow
            className="mt-[5px]"
            cells={[
              ['I1', '26100.293 kg mm'],
              ['I2', '25984.603 kg mm'],
              ['I3', '233.922 kg mm^2'],
            ]}
          />
          <div className="mt-[6px] ml-[52px] h-[20px] leading-[20px]"><M>沿主力矩的旋轉</M></div>
          <InertiaRow
            className="mt-[5px]"
            cells={[
              ['Rx', '0.00 deg (相對誤'],
              ['Ry', '-9.34 deg (相對誤'],
              ['Rz', '0.00 deg (相對誤'],
            ]}
          />
          <div className="mt-[48px] ml-[4px] h-[20px] leading-[20px]"><M>*值不會反映取代，或表面熔接質量或體積</M></div>
        </div>
      </div>
      <div className="mt-[11px] flex items-start">
        <button className="w-[21px] h-[31px] shrink-0 bg-[#dcdcdc] border border-[#bdbdbd] flex items-center justify-center -ml-[1px]">
          <span className="w-[15px] h-[17px] bg-white border border-[#333] flex items-center justify-center text-[12px] font-bold leading-none">?</span>
        </button>
        <button className={`ml-[187px] w-[139px] ${btn} bg-[#e1e1e1] border-2 border-[#0078d7]`}><M>關閉</M></button>
        <button className={`ml-[11px] w-[139px] ${btnOff}`}><M>取消</M></button>
        <button className={`ml-[11px] w-[139px] ${btnOff}`}><M>套用(A)</M></button>
      </div>
      <svg width="13" height="13" viewBox="0 0 13 13" className="absolute right-[2px] bottom-[2px]" fill="#b5b5b5">
        <path d="M9 0h4v4H9zM5 4h4v4H5zM9 4h4v4H9zM0 9h4v4H0zM5 9h4v4H5zM9 9h4v4H9z" />
      </svg>
    </div>
  </div>
);

export default function App() {
  return (
    <div className="relative w-[1920px] h-[1080px] overflow-hidden flex flex-col bg-[#525252] font-['Noto_Sans','Noto_Sans_CJK_TC',sans-serif]">
      <TitleBar />
      <RibbonTabs />
      <Ribbon />
      <div className="flex-1 flex min-h-0">
        <ModelPanel />
        <div className="flex-1 flex flex-col min-w-0">
          <div className="flex-1 flex min-h-0">
            <div className="w-[4px] bg-[#565656]" />
            <Viewport />
          </div>
          <DocTabs />
        </div>
      </div>
      <StatusBar />
      <Taskbar />
      <Dialog />
    </div>
  );
}
